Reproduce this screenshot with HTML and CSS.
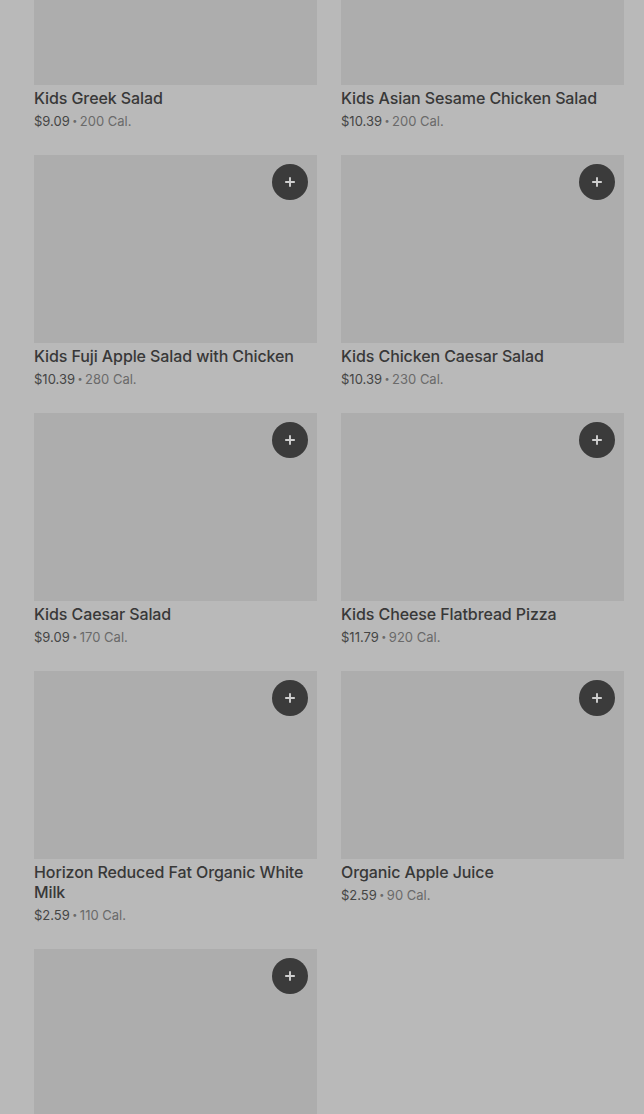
FILE: index.html
```html
<!DOCTYPE html>
<html lang="en">
<head>
<meta charset="utf-8">
<title>Menu</title>
<link rel="stylesheet" href="styles.css">
</head>
<body>
<main class="page">
  <div class="grid">
    <article class="card">
      <div class="thumb"></div>
      <h3 class="title">Kids Greek Salad</h3>
      <p class="meta"><span class="price">$9.09</span><span class="dot">•</span><span class="cal">200 Cal.</span></p>
    </article>
    <article class="card">
      <div class="thumb"></div>
      <h3 class="title">Kids Asian Sesame Chicken Salad</h3>
      <p class="meta"><span class="price">$10.39</span><span class="dot">•</span><span class="cal">200 Cal.</span></p>
    </article>
    <article class="card">
      <div class="thumb"><button class="add" aria-label="Add"><svg viewBox="0 0 16 16" width="14" height="14"><path d="M8 2.5v11M2.5 8h11" stroke="currentColor" stroke-width="2.2" fill="none"/></svg></button></div>
      <h3 class="title">Kids Fuji Apple Salad with Chicken</h3>
      <p class="meta"><span class="price">$10.39</span><span class="dot">•</span><span class="cal">280 Cal.</span></p>
    </article>
    <article class="card">
      <div class="thumb"><button class="add" aria-label="Add"><svg viewBox="0 0 16 16" width="14" height="14"><path d="M8 2.5v11M2.5 8h11" stroke="currentColor" stroke-width="2.2" fill="none"/></svg></button></div>
      <h3 class="title">Kids Chicken Caesar Salad</h3>
      <p class="meta"><span class="price">$10.39</span><span class="dot">•</span><span class="cal">230 Cal.</span></p>
    </article>
    <article class="card">
      <div class="thumb"><button class="add" aria-label="Add"><svg viewBox="0 0 16 16" width="14" height="14"><path d="M8 2.5v11M2.5 8h11" stroke="currentColor" stroke-width="2.2" fill="none"/></svg></button></div>
      <h3 class="title">Kids Caesar Salad</h3>
      <p class="meta"><span class="price">$9.09</span><span class="dot">•</span><span class="cal">170 Cal.</span></p>
    </article>
    <article class="card">
      <div class="thumb"><button class="add" aria-label="Add"><svg viewBox="0 0 16 16" width="14" height="14"><path d="M8 2.5v11M2.5 8h11" stroke="currentColor" stroke-width="2.2" fill="none"/></svg></button></div>
      <h3 class="title">Kids Cheese Flatbread Pizza</h3>
      <p class="meta"><span class="price">$11.79</span><span class="dot">•</span><span class="cal">920 Cal.</span></p>
    </article>
    <article class="card">
      <div class="thumb"><button class="add" aria-label="Add"><svg viewBox="0 0 16 16" width="14" height="14"><path d="M8 2.5v11M2.5 8h11" stroke="currentColor" stroke-width="2.2" fill="none"/></svg></button></div>
      <h3 class="title">Horizon Reduced Fat Organic White Milk</h3>
      <p class="meta"><span class="price">$2.59</span><span class="dot">•</span><span class="cal">110 Cal.</span></p>
    </article>
    <article class="card">
      <div class="thumb"><button class="add" aria-label="Add"><svg viewBox="0 0 16 16" width="14" height="14"><path d="M8 2.5v11M2.5 8h11" stroke="currentColor" stroke-width="2.2" fill="none"/></svg></button></div>
      <h3 class="title">Organic Apple Juice</h3>
      <p class="meta"><span class="price">$2.59</span><span class="dot">•</span><span class="cal">90 Cal.</span></p>
    </article>
    <article class="card">
      <div class="thumb"><button class="add" aria-label="Add"><svg viewBox="0 0 16 16" width="14" height="14"><path d="M8 2.5v11M2.5 8h11" stroke="currentColor" stroke-width="2.2" fill="none"/></svg></button></div>
    </article>
  </div>
</main>
</body>
</html>
```
FILE: styles.css
```css
html, body {
  margin: 0;
  padding: 0;
  height: 100%;
  overflow: hidden;
}
body {
  background: #b9b9b9;
  font-family: Inter, Roboto, "Liberation Sans", Arial, sans-serif;
  color: #3a3a3a;
}
.page {
  padding: 0 20px 0 34px;
}
.grid {
  margin-top: -103px;
  display: grid;
  grid-template-columns: 283px 283px;
  column-gap: 24px;
  row-gap: 24px;
  align-items: start;
}
.card {
  display: flex;
  flex-direction: column;
}
.thumb {
  position: relative;
  height: 188px;
  background: #adadad;
}
.add {
  position: absolute;
  top: 9px;
  right: 9px;
  width: 36px;
  height: 36px;
  border-radius: 50%;
  border: 0;
  padding: 0;
  background: #3b3b3b;
  color: #cfcfcf;
  display: flex;
  align-items: center;
  justify-content: center;
}
.title {
  margin: 3px 0 0;
  font-size: 16px;
  line-height: 20px;
  font-weight: 500;
  letter-spacing: -0.1px;
  color: #383838;
}
.meta {
  margin: 3px 0 0;
  font-size: 13px;
  line-height: 20px;
  display: flex;
  align-items: center;
  gap: 2.5px;
}
.price {
  color: #454545;
}
.dot {
  color: #6a6a6a;
  font-size: 9px;
}
.cal {
  color: #6a6a6a;
}
```
